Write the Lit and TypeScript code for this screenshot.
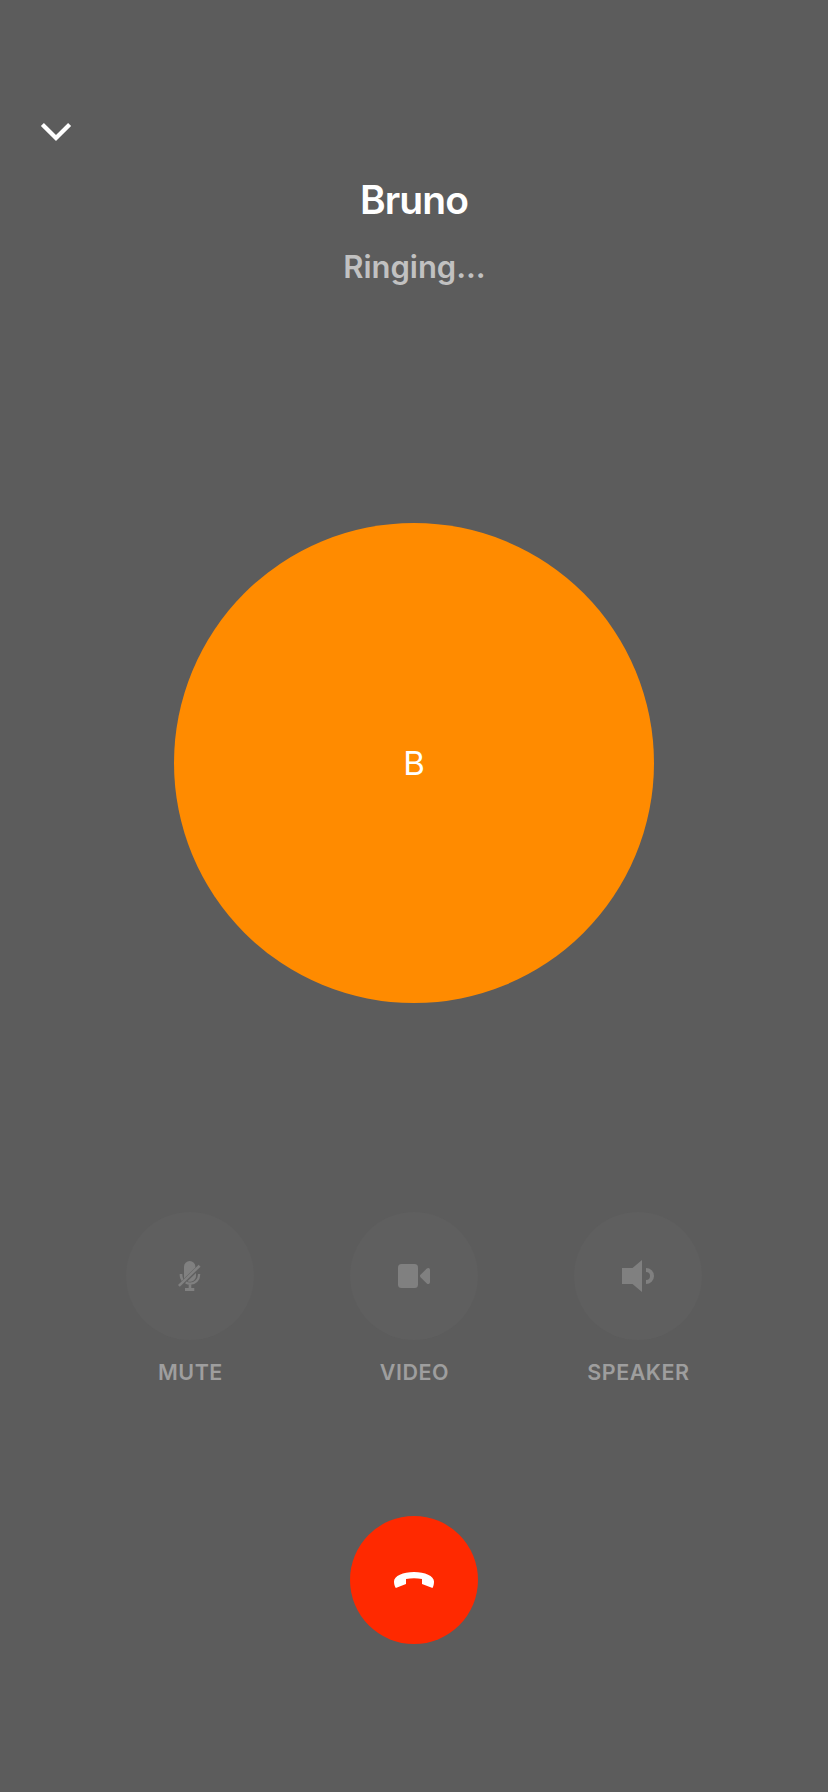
import { LitElement, html, css } from "lit";
import { customElement, property } from "lit/decorators.js";

@customElement("call-control")
class CallControl extends LitElement {
  @property() label = "";

  static styles = css`
    :host {
      display: flex;
      flex-direction: column;
      align-items: center;
      width: 128px;
    }
    .disc {
      width: 128px;
      height: 128px;
      border-radius: 50%;
      background: #5f5f5f;
      display: grid;
      place-items: center;
    }
    .label {
      margin-top: 19px;
      margin-bottom: 1px;
      font-size: 21.5px;
      line-height: 26px;
      font-weight: 600;
      letter-spacing: 0.5px;
      margin-right: -0.9px;
      color: #9e9e9e;
      white-space: nowrap;
    }
  `;

  render() {
    return html`
      <div class="disc"><slot></slot></div>
      <div class="label">${this.label}</div>
    `;
  }
}

@customElement("app-root")
class AppRoot extends LitElement {
  static styles = css`
    :host {
      display: flex;
      flex-direction: column;
      align-items: center;
      box-sizing: border-box;
      width: 100%;
      height: 1792px;
      padding-top: 120px;
      background: #5c5c5c;
      color: #fff;
      font-family: Inter, "Liberation Sans", sans-serif;
    }
    svg {
      display: block;
    }
    .back {
      align-self: flex-start;
      margin-left: 40px;
    }
    .name {
      margin: 32px 0 0;
      height: 48px;
      line-height: 48px;
      font-size: 39px;
      font-weight: 600;
      letter-spacing: -0.9px;
    }
    .status {
      margin-top: 23px;
      height: 40px;
      line-height: 40px;
      font-size: 31px;
      font-weight: 600;
      letter-spacing: -0.05px;
      margin-right: -1px;
      color: #c1c1c1;
    }
    .avatar {
      width: 480px;
      height: 480px;
      margin-top: 236px;
      border-radius: 50%;
      background: #ff8b00;
      display: grid;
      place-items: center;
      font-size: 33px;
      line-height: 40px;
    }
    .controls {
      display: flex;
      gap: 96px;
      margin-top: 209px;
    }
    .glyph {
      fill: #808080;
    }
    .end {
      width: 128px;
      height: 128px;
      margin-top: 130px;
      border-radius: 50%;
      background: #ff2900;
      display: grid;
      place-items: center;
    }
  `;

  render() {
    return html`
      <svg class="back" width="32" height="24" viewBox="0 0 32 24">
        <path d="M2.400 4.500 16 18 29.600 4.500" fill="none" stroke="#fff" stroke-width="4.300"/>
      </svg>
      <h1 class="name">Bruno</h1>
      <div class="status">Ringing...</div>
      <div class="avatar">B</div>
      <div class="controls">
        <call-control label="MUTE">
          <svg class="glyph" width="32" height="32" viewBox="0 0 32 32">
            <path d="M10 18.500V6.800a5.700 5.700 0 0 1 11.400 0v.7L10.300 18.300Z"/>
            <path d="M4.900 25.900 25.600 5.700" fill="none" stroke="#808080" stroke-width="2.600"/>
            <path d="M5.700 14v1.500q0 3 1.900 5.600l1.900-1.900q-1.200-1.900-1.200-5.200Z"/>
            <path d="M22 13v2.300a6 6 0 0 1-8.600 5.900Z"/>
            <path d="M25.100 14v.8a9 9 0 0 1-9 8.900q-2.300 0-4.400-1.100" fill="none" stroke="#808080" stroke-width="2.300"/>
            <path d="M14.700 24.300h2.600V28H20.300v3H11v-3h3.700Z"/>
          </svg>
        </call-control>
        <call-control label="VIDEO">
          <svg class="glyph" width="32" height="32" viewBox="0 0 32 32">
            <rect x="0" y="4" width="20" height="24" rx="3.500"/>
            <path d="M22.500 14.800 28.800 8.600Q30 7.600 31.200 8.200 32 8.700 32 10v12q0 1.300-.8 1.800-1.200.6-2.400-.4L22.500 17.200q-1-1.200 0-2.400Z"/>
          </svg>
        </call-control>
        <call-control label="SPEAKER">
          <svg class="glyph" width="32" height="32" viewBox="0 0 32 32">
            <path d="M0 8h10.500L20 0v32L10.500 24H0Z"/>
            <path d="M24 10a6 6 0 0 1 0 12" fill="none" stroke="#808080" stroke-width="4"/>
          </svg>
        </call-control>
      </div>
      <div class="end">
        <svg width="40" height="16" viewBox="0 0 40 16" fill="#fff">
          <path d="M20 0C31 0 40 4 40 9.500 40 12 39.500 14 38.500 16L28 12V7Q20 5.300 12 7v5L1.800 16C.6 14 0 12 0 9.500 0 4 9 0 20 0Z"/>
        </svg>
      </div>
    `;
  }
}
